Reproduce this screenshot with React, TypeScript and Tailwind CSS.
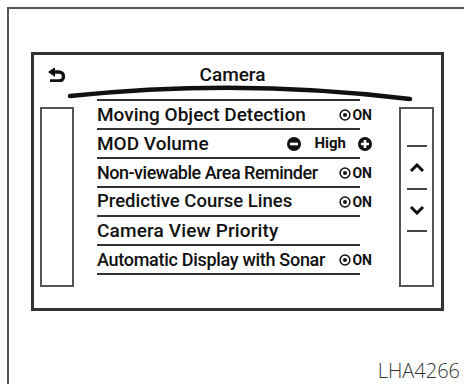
type Row = { label: string; value?: 'on' | 'volume'; size: string };

// per-row sizing to follow the condensed face of the original screen
const rows: Row[] = [
  { label: 'Moving Object Detection', value: 'on', size: 'text-[19px]' },
  { label: 'MOD Volume', value: 'volume', size: 'text-[19px]' },
  { label: 'Non-viewable Area Reminder', value: 'on', size: 'text-[18px] tracking-[-0.5px]' },
  { label: 'Predictive Course Lines', value: 'on', size: 'text-[18.5px]' },
  { label: 'Camera View Priority', size: 'text-[19px] tracking-[0.15px]' },
  { label: 'Automatic Display with Sonar', value: 'on', size: 'text-[18px] tracking-[-0.3px]' },
];

function BackIcon() {
  return (
    <svg width="17" height="14" viewBox="0 0 17 14">
      <polygon points="0,4 7,-1 7,9" fill="#111" />
      <path d="M5 4 H11 A4.5 4.5 0 0 1 11 13 H2" fill="none" stroke="#111" strokeWidth="3.4" />
    </svg>
  );
}

function OnValue() {
  return (
    <div className="flex items-center">
      <svg width="12" height="12" viewBox="0 0 12 12">
        <circle cx="6" cy="6" r="4.9" fill="none" stroke="#111" strokeWidth="1.5" />
        <circle cx="6" cy="6" r="2" fill="#111" />
      </svg>
      <span className="ml-[1px] text-[14px] font-bold leading-none">ON</span>
    </div>
  );
}

function CircleButton({ plus }: { plus?: boolean }) {
  return (
    <svg width="14" height="14" viewBox="0 0 14 14">
      <circle cx="7" cy="7" r="7" fill="#111" />
      <rect x="3" y="5.7" width="8" height="2.6" fill="#fff" />
      {plus && <rect x="5.7" y="3" width="2.6" height="8" fill="#fff" />}
    </svg>
  );
}

function Chevron({ down }: { down?: boolean }) {
  return (
    <svg width="16" height="10" viewBox="0 0 16 10">
      <polyline
        points={down ? '2,2 8,8 14,2' : '2,8 8,2 14,8'}
        fill="none"
        stroke="#111"
        strokeWidth="3"
      />
    </svg>
  );
}

export default function App() {
  return (
    <div className="w-[464px] h-[384px] bg-white overflow-hidden text-[#111] font-['Roboto',sans-serif]">
      <div className="ml-[7px] mt-[7px] w-[457px] h-[377px] border-t-2 border-l-2 border-[#555] flex flex-col">
        {/* Screen */}
        <div className="ml-[22px] mt-[43px] w-[413px] h-[259px] border-[3px] border-[#333] flex flex-col">
          {/* Header */}
          <div className="h-[31px] pt-[8px] flex items-center">
            <div className="ml-[14px] w-[17px] h-[14px]">
              <BackIcon />
            </div>
            <div className="flex-1 mr-[41px] text-center text-[19px] font-medium leading-none">Camera</div>
          </div>
          <svg className="block overflow-visible" width="407" height="13" viewBox="0 0 407 13">
            <path d="M36 10 Q206 -8 376 13" fill="none" stroke="#111" strokeWidth="4.5" strokeLinecap="round" />
          </svg>

          {/* Body */}
          <div className="flex items-start">
            <div className="ml-[6px] mt-[8px] w-[34px] h-[180px] border-2 border-[#555]" />

            <div className="ml-[23px] w-[276px]">
              <div className="w-[263px] h-[2px] bg-[#333]" />
              {rows.map((r) => (
                <div key={r.label}>
                  <div className="h-[27px] pr-[1px] flex items-center justify-between">
                    <span className={`${r.size} font-medium leading-none whitespace-nowrap`}>{r.label}</span>
                    {r.value === 'on' && <OnValue />}
                    {r.value === 'volume' && (
                      <div className="flex items-center">
                        <CircleButton />
                        <span className="ml-[13px] mr-[12px] text-[15px] font-bold leading-none">High</span>
                        <CircleButton plus />
                      </div>
                    )}
                  </div>
                  <div className="w-[263px] h-[2px] bg-[#333]" />
                </div>
              ))}
            </div>

            <div className="ml-[26px] mt-[8px] w-[35px] h-[180px] border-2 border-[#555] flex flex-col items-center">
              <div className="mt-[36px] w-[20px] h-[2px] bg-[#444]" />
              <div className="h-[41px] flex items-center">
                <Chevron />
              </div>
              <div className="w-[20px] h-[2px] bg-[#444]" />
              <div className="h-[40px] flex items-center">
                <Chevron down />
              </div>
              <div className="w-[20px] h-[2px] bg-[#444]" />
            </div>
          </div>
        </div>

        <div className="mt-[53px] pr-[4px] flex justify-end">
          <span className="text-[20px] leading-[14px] font-light text-[#333] font-['Open_Sans',sans-serif]">LHA4266</span>
        </div>
      </div>
    </div>
  );
}
